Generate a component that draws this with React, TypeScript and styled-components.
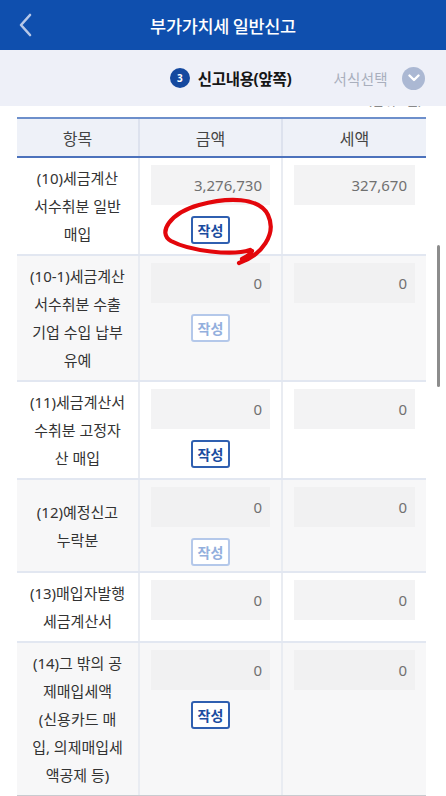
import React from 'react';
import styled, { createGlobalStyle } from 'styled-components';

const GlobalStyle = createGlobalStyle`
  html, body { margin: 0; padding: 0; background: #fff; }
  body {
    font-family: "Noto Sans", "Noto Sans CJK KR", sans-serif;
    width: 446px;
    height: 796px;
    overflow: hidden;
    -webkit-font-smoothing: antialiased;
  }
  * { box-sizing: border-box; }
`;

const Page = styled.div`
  position: relative;
  width: 446px;
  height: 796px;
  overflow: hidden;
  background: #fff;
`;

const FixedHeader = styled.header`
  position: absolute;
  top: 0;
  left: 0;
  right: 0;
  z-index: 5;
`;

const TopBar = styled.div`
  height: 50px;
  background: #0f4fae;
  display: grid;
  grid-template-columns: 50px 1fr 50px;
  align-items: center;
`;

const BackButton = styled.button`
  border: 0;
  background: transparent;
  padding: 0 0 0 18px;
  height: 50px;
  display: flex;
  align-items: center;
  cursor: pointer;
`;

const Title = styled.h1`
  margin: 0;
  text-align: center;
  color: #fff;
  font-family: "Noto Sans CJK KR", sans-serif;
  font-size: 17.5px;
  font-weight: 500;
  letter-spacing: -0.3px;
`;

const SubBar = styled.div`
  height: 56px;
  background: #eef0f8;
  display: flex;
  align-items: center;
  justify-content: flex-end;
  padding-right: 21px;
`;

const StepBadge = styled.span`
  width: 20px;
  height: 20px;
  border-radius: 50%;
  background: #15499f;
  color: #fff;
  font-size: 10px;
  font-weight: 700;
  display: flex;
  align-items: center;
  justify-content: center;
`;

const StepTitle = styled.span`
  margin-left: 8px;
  font-size: 15.5px;
  font-weight: 700;
  color: #151515;
  letter-spacing: -0.3px;
`;

const SelectLabel = styled.span`
  margin-left: 42px;
  font-family: "Noto Sans CJK KR", sans-serif;
  font-size: 14.5px;
  color: #a9afbd;
  letter-spacing: 0.3px;
`;

const SelectCircle = styled.span`
  margin-left: 14px;
  width: 23px;
  height: 23px;
  border-radius: 50%;
  background: #abb8d3;
  display: flex;
  align-items: center;
  justify-content: center;
`;

const Main = styled.main`
  padding: 92px 20px 0 17px;
`;

const UnitNote = styled.div`
  font-size: 13px;
  line-height: 16px;
  text-align: right;
  color: #888;
  padding-right: 4px;
`;

const Table = styled.div`
  margin-top: 9px;
  width: 409px;
`;

const HeadRow = styled.div`
  display: grid;
  grid-template-columns: 123px 143px 143px;
  background: #eef1f8;
  border-top: 2px solid #6d8fcb;
  border-bottom: 2px solid #4c72bc;
  height: 41px;
`;

const HeadCell = styled.div<{ $last?: boolean }>`
  display: flex;
  align-items: center;
  justify-content: center;
  font-family: "Noto Sans CJK KR", sans-serif;
  font-size: 16px;
  color: #444;
  border-right: ${(p) => (p.$last ? '0' : '2px solid #dde2ee')};
`;

const Row = styled.div<{ $shaded: boolean; $last?: boolean }>`
  display: grid;
  grid-template-columns: 123px 143px 143px;
  background: ${(p) => (p.$shaded ? '#f7f7f8' : '#ffffff')};
  border-bottom: 2px solid ${(p) => (p.$last ? '#c9cbd0' : '#e2e7f1')};
`;

const LabelCell = styled.div`
  padding: 6px 2px;
  display: flex;
  align-items: center;
  justify-content: center;
  text-align: center;
  font-size: 15px;
  line-height: 28px;
  color: #333;
  border-right: 2px solid #e9ecf2;
`;

const ValueCell = styled.div<{ $last?: boolean }>`
  padding: 7px 11px 5px;
  display: flex;
  flex-direction: column;
  align-items: center;
  gap: 11px;
  border-right: ${(p) => (p.$last ? '0' : '2px solid #e9ecf2')};
`;

const ValueBox = styled.div<{ $shaded: boolean }>`
  width: 100%;
  height: 40px;
  background: ${(p) => (p.$shaded ? '#f1f1f2' : '#f3f3f4')};
  display: flex;
  align-items: center;
  justify-content: flex-end;
  padding-right: 8px;
  font-size: 15px;
  color: #707070;
`;

const WriteButton = styled.button<{ $inactive: boolean }>`
  width: 39px;
  height: 28px;
  padding: 0;
  border-radius: 3px;
  background: #fff;
  border: 2px solid ${(p) => (p.$inactive ? '#b4c8ea' : '#2f5fb0')};
  color: ${(p) => (p.$inactive ? '#93afdd' : '#1b4c9f')};
  font-family: "Noto Sans CJK KR", sans-serif;
  font-size: 14px;
  font-weight: 700;
  display: flex;
  align-items: center;
  justify-content: center;
  cursor: pointer;
`;

const ScrollThumb = styled.div`
  position: absolute;
  left: 437px;
  top: 245px;
  width: 3px;
  height: 142px;
  border-radius: 2px;
  background: #8c8c8c;
  z-index: 6;
`;

const Annotation = styled.svg`
  position: absolute;
  top: 0;
  left: 0;
  width: 446px;
  height: 796px;
  pointer-events: none;
  z-index: 7;
`;

type Item = {
  label: string[];
  amount: string;
  tax: string;
  button: 'active' | 'inactive' | 'none';
};

const items: Item[] = [
  { label: ['(10)세금계산', '서수취분 일반', '매입'], amount: '3,276,730', tax: '327,670', button: 'active' },
  { label: ['(10-1)세금계산', '서수취분 수출', '기업 수입 납부', '유예'], amount: '0', tax: '0', button: 'inactive' },
  { label: ['(11)세금계산서', '수취분 고정자', '산 매입'], amount: '0', tax: '0', button: 'active' },
  { label: ['(12)예정신고', '누락분'], amount: '0', tax: '0', button: 'inactive' },
  { label: ['(13)매입자발행', '세금계산서'], amount: '0', tax: '0', button: 'none' },
  { label: ['(14)그 밖의 공', '제매입세액', '(신용카드 매', '입, 의제매입세', '액공제 등)'], amount: '0', tax: '0', button: 'active' },
];

export default function App() {
  return (
    <Page>
      <GlobalStyle />
      <FixedHeader>
        <TopBar>
          <BackButton aria-label="뒤로">
            <svg width="14" height="24" viewBox="0 0 14 24">
              <polyline points="12,2 3,12 12,22" fill="none" stroke="#b7c8e8" strokeWidth="2.6" strokeLinecap="round" strokeLinejoin="round" />
            </svg>
          </BackButton>
          <Title>부가가치세 일반신고</Title>
          <span />
        </TopBar>
        <SubBar>
          <StepBadge>3</StepBadge>
          <StepTitle>신고내용(앞쪽)</StepTitle>
          <SelectLabel>서식선택</SelectLabel>
          <SelectCircle>
            <svg width="12" height="8" viewBox="0 0 12 8">
              <polyline points="1.5,1.5 6,6 10.5,1.5" fill="none" stroke="#fff" strokeWidth="2.4" strokeLinecap="round" strokeLinejoin="round" />
            </svg>
          </SelectCircle>
        </SubBar>
      </FixedHeader>

      <Main>
        <UnitNote>(단위 : 원)</UnitNote>
        <Table>
          <HeadRow>
            <HeadCell>항목</HeadCell>
            <HeadCell>금액</HeadCell>
            <HeadCell $last>세액</HeadCell>
          </HeadRow>
          {items.map((it, i) => {
            const shaded = i % 2 === 1;
            return (
              <Row key={i} $shaded={shaded} $last={i === items.length - 1}>
                <LabelCell>
                  <div>
                    {it.label.map((l, j) => (
                      <React.Fragment key={j}>
                        {l}
                        {j < it.label.length - 1 && <br />}
                      </React.Fragment>
                    ))}
                  </div>
                </LabelCell>
                <ValueCell>
                  <ValueBox $shaded={shaded}>{it.amount}</ValueBox>
                  {it.button !== 'none' && (
                    <WriteButton $inactive={it.button === 'inactive'}>작성</WriteButton>
                  )}
                </ValueCell>
                <ValueCell $last>
                  <ValueBox $shaded={shaded}>{it.tax}</ValueBox>
                </ValueCell>
              </Row>
            );
          })}
        </Table>
      </Main>

      <ScrollThumb />
      <Annotation viewBox="0 0 446 796">
        <path
          d="M250 250 C 232 256, 190 251, 171 241 C 157 233, 170 213, 199 205 C 228 197, 259 197, 268 215 C 277 234, 262 255, 239 263 M252 251 C 250 255, 246 257, 242 259"
          fill="none"
          stroke="#e3060b"
          strokeWidth="4.2"
          strokeLinecap="round"
          strokeLinejoin="round"
        />
      </Annotation>
    </Page>
  );
}
